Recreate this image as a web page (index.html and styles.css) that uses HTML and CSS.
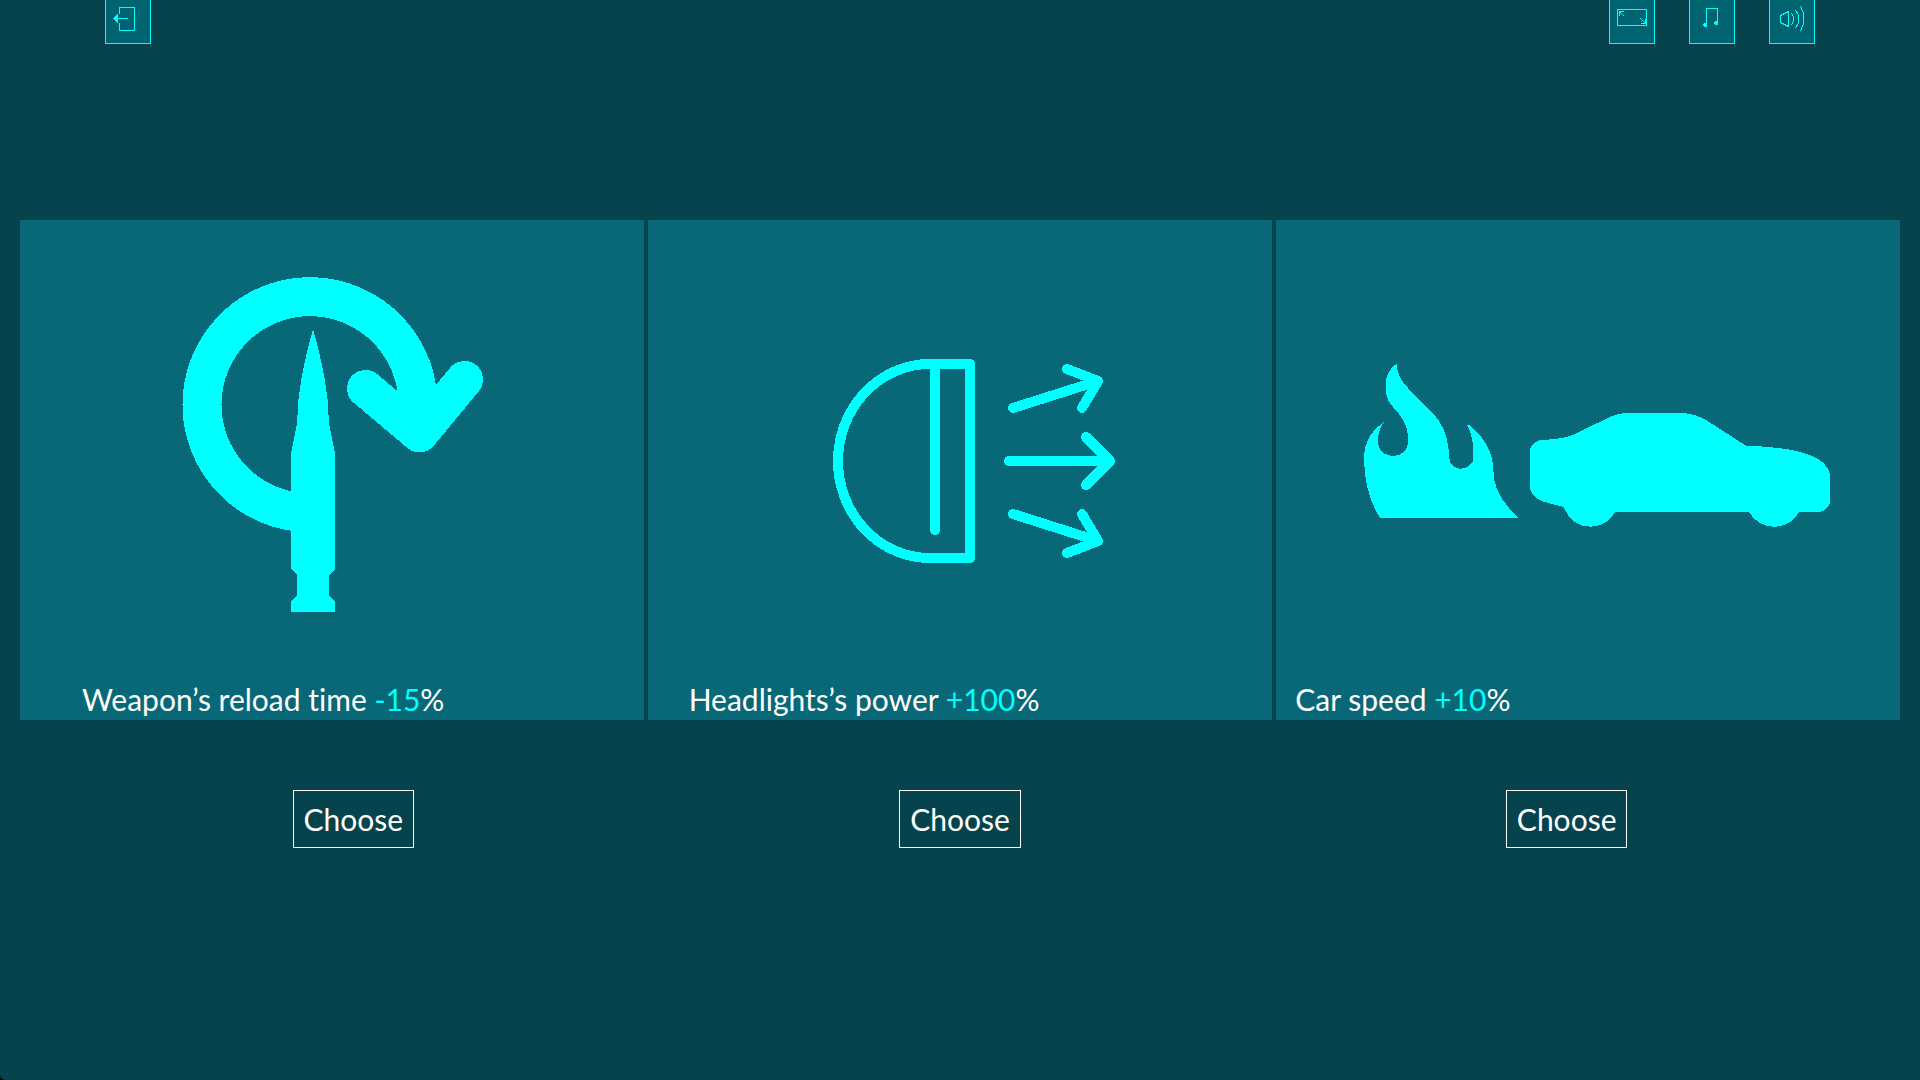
FILE: index.html
```
<!DOCTYPE html>
<html lang="en">
  <head>
    <meta charset="utf-8" />
    <title>Choose an upgrade</title>
    <link rel="stylesheet" href="styles.css" />
  </head>

  <body>
    <header class="toolbar">
      <button class="icon-button" aria-label="Exit">
        <svg viewBox="1 0 44 43">
          <path d="M14.5 14V7.5H29.5V30.5H14.5V23M11 18.5H23" />
          <path class="solid" d="M8 18.5L13 14V23Z" />
        </svg>
      </button>
      <div class="toolbar-group">
        <button class="icon-button" aria-label="Fullscreen">
          <svg viewBox="1 0 44 43">
            <path d="M8.5 9.5H37.5V25.5H8.5Z" />
            <path d="M10.5 16V11.5H15M11 12L15 16M36.5 19V23.5H32M36 23L31 18" />
          </svg>
        </button>
        <button class="icon-button" aria-label="Music">
          <svg viewBox="1 0 44 43">
            <path d="M17.5 25V8.5H28.5V23" />
            <path class="solid" d="M15 23H18V26L17 27H15L14 26V24ZM26 21H29V24L28 25H26L25 24V22Z" />
          </svg>
        </button>
        <button class="icon-button" aria-label="Sound">
          <svg viewBox="1 0 44 43">
            <path d="M11.5 15.5L19.5 11.5V26.5L11.5 22.5Z" />
            <path d="M22.5 13Q26.5 19 22.5 25M26.5 10Q33.5 19 26.5 28M31.5 6Q38.5 18.5 31.5 31" />
          </svg>
        </button>
      </div>
    </header>

    <main>
      <div class="cards">
        <div class="card">
          <svg viewBox="0 0 624 500">
            <path class="ring" d="M274 291.500A108 108 0 1 1 398 184.500V200" />
            <path class="arrow" d="M345.500 168.500L399.500 214L444.500 159.500" />
            <path class="solid" d="M399 165L370 190L400 214L425 180Z" />
            <path
              class="solid"
              d="M293 109C302 140 309 175 309 204L315 233V349L309 355V376L315 381V392H271V381L277 376V355L271 349V233L277 204C277 175 284 140 293 109Z"
            />
          </svg>
        </div>
        <div class="card">
          <svg viewBox="0 0 624 500">
            <g class="lines">
              <path d="M287.500 144H322V338H282A92 97 0 0 1 282 144H288" />
              <path d="M287 144V310" />
              <path d="M365 188L450 161M419 149L450 161L434 188" />
              <path d="M361 241H462M438 217L462 241L438 265" />
              <path d="M365 294L450 321M419 333L450 321L434 294" />
            </g>
          </svg>
        </div>
        <div class="card">
          <svg viewBox="0 0 624 500">
            <g class="solid" transform="translate(74 130) scale(.3333)">
              <path
                d="M90 503C62 460 42 400 42 320C42 280 62 240 102 216C82 240 84 270 84 282C90 307 108 318 130 318C152 318 170 304 174 282V260C172 225 160 205 124 165C108 145 108 130 108 120V88C114 68 124 50 141 41C141 70 150 90 175 115L250 190C275 218 292 255 296 300C298 325 300 335 300 338C320 362 346 364 369 334V290C367 260 362 245 351 225H358C400 260 428 300 430 360C430 410 450 450 504 503Z"
              />
              <path
                d="M540 298Q550 272 576 270C620 268 650 264 680 250L765 208Q800 189 835 189H995Q1035 191 1068 210L1188 287C1300 291 1425 305 1440 372V458Q1432 482 1410 486H1348C1315 545 1230 545 1197 486H796C765 545 670 550 641 471L580 455Q550 445 540 418Z"
              />
            </g>
          </svg>
        </div>
      </div>

      <div class="options">
        <div class="option">
          <p>Weapon’s reload time <span>-15</span>%</p>
          <button class="choose">Choose</button>
        </div>
        <div class="option">
          <p>Headlights’s power <span>+100</span>%</p>
          <button class="choose">Choose</button>
        </div>
        <div class="option">
          <p>Car speed <span>+10</span>%</p>
          <button class="choose">Choose</button>
        </div>
      </div>
    </main>
  </body>
</html>
```

FILE: styles.css
```
html {
  background-color: #000;
}

body {
  background-color: #07434c;
  border-bottom-left-radius: 5px;
  color: #fff;
  font-family: Lato, "Liberation Sans", sans-serif;
  font-size: 30px;
  font-variant-ligatures: none;
  line-height: 40px;
  margin: 0;
  min-height: 100vh;
}

button {
  color: inherit;
  cursor: pointer;
  font: inherit;
}

svg {
  display: block;
  fill: none;
  shape-rendering: crispEdges;
  stroke: #0ff;
  width: 100%;
}

.solid {
  fill: #0ff;
  stroke: none;
}

.toolbar {
  display: flex;
  justify-content: space-between;
  padding: 0 105px;
}

.toolbar-group {
  display: flex;
  gap: 34px;
}

.icon-button {
  background-color: #006470;
  border: 1px solid #0ff;
  border-top: 0;
  height: 44px;
  padding: 0;
  width: 46px;
}

.cards {
  display: grid;
  gap: 4px;
  grid-template-columns: repeat(3, 1fr);
  margin-top: 176px;
  padding: 0 20px;
}

.card {
  background-color: #096877;
}

.card svg {
  height: 500px;
}

.ring {
  stroke-width: 39px;
}

.arrow {
  stroke-linecap: round;
  stroke-linejoin: round;
  stroke-width: 37px;
}

.lines {
  stroke-linecap: round;
  stroke-linejoin: round;
  stroke-width: 10px;
}

/* captions sit on the bottom edge of the cards */
.options {
  display: grid;
  grid-template-columns: repeat(3, 1fr);
  margin-top: -41px;
  padding: 0 50px;
  position: relative;
}

.option {
  display: flex;
  flex-direction: column;
}

.option p {
  margin: 0 0 71px;
  padding-left: 32px;
}

.option span {
  color: #0ff;
}

.choose {
  align-self: center;
  background: none;
  border: 1px solid #fff;
  height: 58px;
  padding: 0 10px;
}
```
